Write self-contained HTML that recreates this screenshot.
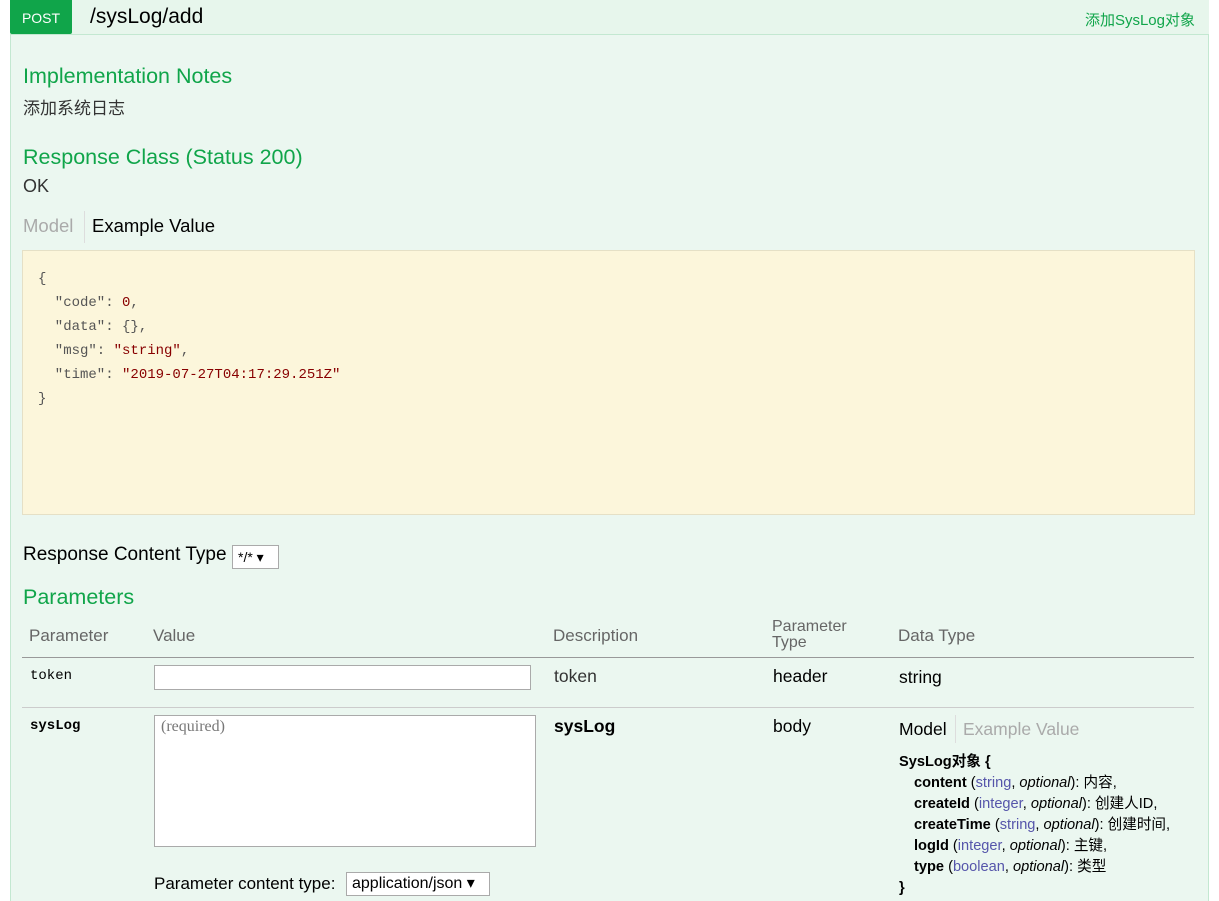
<!DOCTYPE html>
<html><head><meta charset="utf-8"><style>
*{box-sizing:border-box;margin:0;padding:0}
body{width:1219px;height:901px;background:#fff;font-family:"Liberation Sans","Noto Sans CJK SC",sans-serif;position:relative;overflow:hidden;color:#333}
.a{position:absolute;white-space:nowrap}
.g{color:#10a54a;font-size:21.5px}
.mono{font-family:"Liberation Mono","DejaVu Sans Mono",monospace}
</style></head><body>
<div class="a" style="left:10px;top:0;width:1199px;height:901px;background:#ebf7f0;border-left:1px solid #c3e8d1;border-right:1px solid #c3e8d1"></div>
<div class="a" style="left:10px;top:0;width:1199px;height:35px;background:#e7f6ec;border-bottom:1px solid #c3e8d1"></div>
<div class="a" style="left:10px;top:0;width:62px;height:34px;background:#10a54a;color:#fff;font-size:14px;line-height:36px;text-align:center;border-radius:0 0 2px 2px">POST</div>
<div class="a" style="left:90px;top:5px;font-size:21px;color:#000">/sysLog/add</div>
<div class="a" style="right:24px;top:9px;font-size:15px;color:#10a54a">添加SysLog对象</div>
<div class="a g" style="left:23px;top:64px">Implementation Notes</div>
<div class="a" style="left:23px;top:94px;font-size:17px">添加系统日志</div>
<div class="a g" style="left:23px;top:145px">Response Class (Status 200)</div>
<div class="a" style="left:23px;top:176px;font-size:18px">OK</div>
<div class="a" style="left:23px;top:215px;font-size:18.5px;color:#aaa">Model</div>
<div class="a" style="left:84px;top:211px;height:32px;border-left:1px solid #ddd"></div>
<div class="a" style="left:92px;top:215px;font-size:18.5px;color:#000">Example Value</div>
<div class="a mono" style="left:22px;top:250px;width:1173px;height:265px;background:#fcf6db;border:1px solid #e5e0c6;padding:16px 0 0 15px;font-size:14px;line-height:24px;color:#555;white-space:pre">{
  "code": <span style="color:#800">0</span>,
  "data": {},
  "msg": <span style="color:#800">"string"</span>,
  "time": <span style="color:#800">"2019-07-27T04:17:29.251Z"</span>
}</div>
<div class="a" style="left:23px;top:544px;font-size:19px;color:#000">Response Content Type</div>
<div class="a" style="left:232px;top:545px;width:47px;height:24px;background:#fff;border:1px solid #aaa;font-size:14px;line-height:22px;padding-left:5px;color:#000">*/* ▾</div>
<div class="a g" style="left:23px;top:585px">Parameters</div>
<div class="a" style="left:29px;top:626px;font-size:17px;color:#666">Parameter</div>
<div class="a" style="left:153px;top:626px;font-size:17px;color:#666">Value</div>
<div class="a" style="left:553px;top:626px;font-size:17px;color:#666">Description</div>
<div class="a" style="left:772px;top:619px;font-size:16px;color:#666;line-height:16px">Parameter<br>Type</div>
<div class="a" style="left:898px;top:626px;font-size:17px;color:#666">Data Type</div>
<div class="a" style="left:22px;top:657px;width:1172px;border-top:1px solid #999"></div>
<div class="a mono" style="left:30px;top:668px;font-size:14px;color:#000">token</div>
<div class="a" style="left:154px;top:665px;width:377px;height:25px;background:#fff;border:1px solid #aaa"></div>
<div class="a" style="left:554px;top:666px;font-size:17.5px">token</div>
<div class="a" style="left:773px;top:666px;font-size:17.5px;color:#000">header</div>
<div class="a" style="left:899px;top:667px;font-size:17.5px;color:#000">string</div>
<div class="a" style="left:22px;top:707px;width:1172px;border-top:1px solid #ccc"></div>
<div class="a mono" style="left:30px;top:718px;font-size:14px;font-weight:bold;color:#000">sysLog</div>
<div class="a" style="left:154px;top:715px;width:382px;height:132px;background:#fff;border:1px solid #aaa;padding:2px 6px;font-family:'Liberation Serif',serif;font-size:16px;color:#777">(required)</div>
<div class="a" style="left:554px;top:716px;font-size:17.5px;font-weight:bold;color:#000">sysLog</div>
<div class="a" style="left:773px;top:716px;font-size:17.5px;color:#000">body</div>
<div class="a" style="left:899px;top:719px;font-size:17.5px;color:#000">Model</div>
<div class="a" style="left:955px;top:715px;height:28px;border-left:1px solid #ddd"></div>
<div class="a" style="left:963px;top:719px;font-size:17.5px;color:#aaa">Example Value</div>
<div class="a" style="left:899px;top:752px;font-size:14.6px;line-height:21px;color:#000">
<b>SysLog对象 {</b><br>
<div style="padding-left:15px"><b>content</b> (<span style="color:#55a">string</span>, <i>optional</i>): 内容,<br>
<b>createId</b> (<span style="color:#55a">integer</span>, <i>optional</i>): 创建人ID,<br>
<b>createTime</b> (<span style="color:#55a">string</span>, <i>optional</i>): 创建时间,<br>
<b>logId</b> (<span style="color:#55a">integer</span>, <i>optional</i>): 主键,<br>
<b>type</b> (<span style="color:#55a">boolean</span>, <i>optional</i>): 类型</div>
<b>}</b></div>
<div class="a" style="left:154px;top:874px;font-size:17px;color:#000">Parameter content type:</div>
<div class="a" style="left:346px;top:872px;width:144px;height:24px;background:#fff;border:1px solid #aaa;font-size:16px;line-height:22px;padding-left:5px;color:#000">application/json ▾</div>
</body></html>
